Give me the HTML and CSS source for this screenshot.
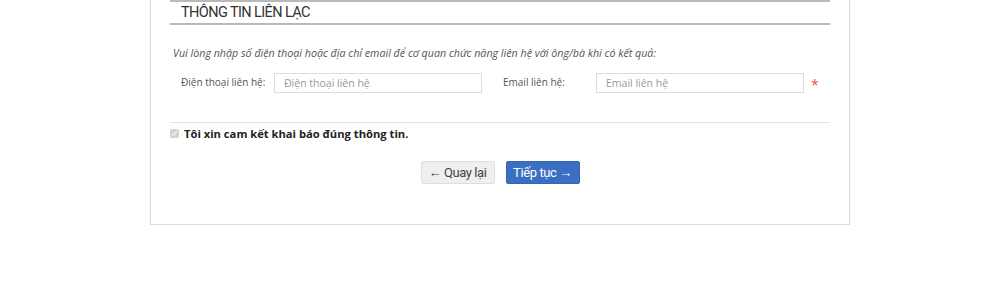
FILE: index.html
```html
<!DOCTYPE html>
<html lang="vi">
<head>
  <meta charset="UTF-8" />
  <meta name="viewport" content="width=device-width, initial-scale=1.0"/>
  <title>Thông tin liên lạc</title>
  <link rel="stylesheet" href="styles.css">
</head>
<body>
  <div class="card">
    <div class="prev-section"></div>

    <div class="section-title">Thông tin liên lạc</div>

    <p class="hint">Vui lòng nhập số điện thoại hoặc địa chỉ email để cơ quan chức năng liên hệ với ông/bà khi có kết quả:</p>

    <div class="contact-row">
      <label for="phone">Điện thoại liên hệ:</label>
      <input type="text" id="phone" placeholder="Điện thoại liên hệ">
      <span class="spacer"></span>
      <label for="email">Email liên hệ:</label>
      <input type="text" id="email" placeholder="Email liên hệ">
      <span class="required">*</span>
    </div>

    <hr class="divider">

    <label class="confirm">
      <input type="checkbox" checked disabled>
      <span>Tôi xin cam kết khai báo đúng thông tin.</span>
    </label>

    <div class="actions">
      <button class="btn btn-back">&larr; Quay lại</button>
      <button class="btn btn-next">Tiếp tục &rarr;</button>
    </div>
  </div>
</body>
</html>
```

FILE: styles.css
```css
body {
  margin: 0;
  background: #fff;
  font-family: 'Open Sans', sans-serif;
  color: #333;
}

.card {
  width: 700px;
  margin: -30px auto 0;
  padding: 0 19px 40px;
  box-sizing: border-box;
  border: 1px solid #dcdcdc;
  border-top: none;
  background: #fff;
  box-shadow: 0 1px 2px rgba(0, 0, 0, 0.06);
}

.prev-section {
  height: 30px;
  border-bottom: 2px solid #b9b9b9;
}

.section-title {
  font-family: 'Roboto', sans-serif;
  font-size: 14.5px;
  letter-spacing: -0.6px;
  text-transform: uppercase;
  color: #333;
  padding: 2px 11px 1px;
  height: 18px;
  line-height: 18px;
  border-bottom: 2px solid #b9b9b9;
}

.hint {
  margin: 20px 0 0 3px;
  font-size: 10.7px;
  font-style: italic;
  color: #555;
  line-height: 17px;
}

.contact-row {
  display: flex;
  align-items: center;
  margin-top: 10px;
  padding-left: 11px;
}

.contact-row label {
  flex: 0 0 93px;
  font-size: 10px;
  color: #555;
  padding-bottom: 3px;
}

.contact-row input {
  flex: 0 0 208px;
  height: 20px;
  box-sizing: border-box;
  border: 1px solid #dcdcdc;
  padding: 0 9px;
  font-family: 'Open Sans', sans-serif;
  font-size: 10.5px;
  outline: none;
}

.contact-row input::placeholder {
  color: #999;
}

.spacer {
  flex: 0 0 21px;
}

.required {
  color: #e8505b;
  font-size: 14px;
  margin-left: 7px;
  padding-top: 3px;
}

.divider {
  border: none;
  border-top: 1px solid #e3e3e3;
  margin: 28px 0 0;
}

.confirm {
  display: flex;
  align-items: center;
  margin-top: 2px;
  font-size: 11.2px;
  line-height: 17px;
  font-weight: bold;
  color: #222;
}

.confirm input {
  width: 9px;
  height: 9px;
  margin: 0 5px 0 0;
}

.actions {
  display: flex;
  justify-content: center;
  gap: 11px;
  margin-top: 19px;
}

.btn {
  width: 74px;
  height: 23px;
  font-family: 'Roboto', sans-serif;
  font-size: 13px;
  letter-spacing: -0.4px;
  border-radius: 2px;
  padding: 0;
  cursor: pointer;
}

.btn-back {
  background: #efefef;
  border: 1px solid #dedede;
  color: #444;
}

.btn-next {
  background: #3b6fc4;
  border: 1px solid #3466b8;
  color: #fff;
}
```
